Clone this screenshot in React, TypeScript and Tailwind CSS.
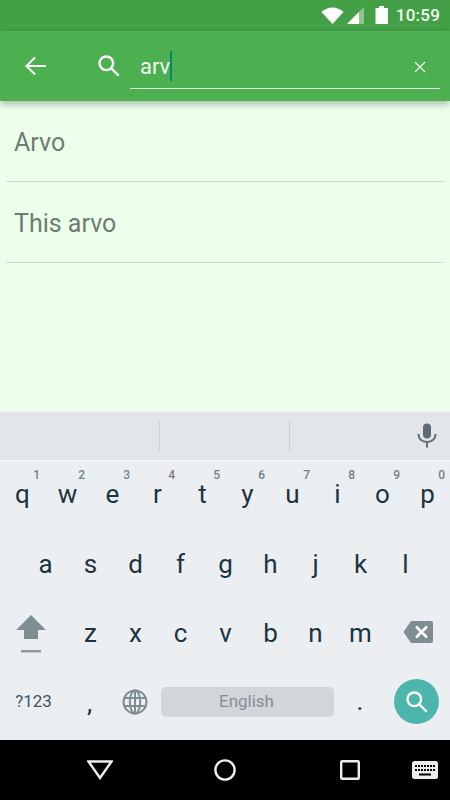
import React from "react";

const font = { fontFamily: "Roboto, sans-serif" };

function SearchIcon({ size, stroke = 2.2 }: { size: number; stroke?: number }) {
  return (
    <svg width={size} height={size} viewBox="0 0 24 24" fill="none" stroke="white" strokeWidth={stroke}>
      <circle cx="9.5" cy="9.5" r="6.3" />
      <path d="M14.2 14.2L21 21" />
    </svg>
  );
}

function Key({ c, n }: { c: string; n?: string }) {
  return (
    <div className="relative w-[45px] flex items-center justify-center text-[26px] text-[#1c3440]">
      {c}
      {n && <span className="absolute right-[5px] top-[8px] text-[12px] font-medium text-[#737f87]">{n}</span>}
    </div>
  );
}

export default function App() {
  const row1 = "qwertyuiop".split("");
  return (
    <div className="w-[450px] h-[800px] flex flex-col overflow-hidden bg-[#ebffeb] font-['Roboto']">
      <div className="h-[31px] bg-[#43a047] flex items-center justify-end pr-[10px] shrink-0">
        <svg width="23" height="17" viewBox="0 0 23 17" className="mr-[3px]"><path d="M0.5 5C7 -1 16 -1 22.5 5L11.5 17Z" fill="white" /></svg>
        <svg width="18" height="18" viewBox="0 0 18 18" className="mr-[10px]"><path d="M0 17L17 0V17Z" fill="white" fillOpacity="0.4" /><path d="M0 17L12 5V17Z" fill="white" /></svg>
        <svg width="13" height="19" viewBox="0 0 13 19" className="mr-[8px]"><path d="M4 0H9V2H13V18H0.5V2H4Z" fill="white" /></svg>
        <span className="text-[17px] font-medium text-white/95 tracking-[0.2px]">10:59</span>
      </div>
      <div className="relative z-10 h-[70px] bg-[#4caf50] flex items-center shrink-0 shadow-[0_3px_7px_rgba(0,0,0,0.28)]">
        <svg width="24" height="24" viewBox="0 0 24 24" className="ml-[23px] mr-[49px]" fill="none" stroke="white" strokeWidth="2">
          <path d="M23 12H3M12 3.5L3.5 12L12 20.5" />
        </svg>
        <div className="mr-[8px] -mt-[1px]"><SearchIcon size={26} /></div>
        <div className="w-[310px] h-[41px] mt-[5px] border-b border-white/80 flex items-center pl-[10px] pr-[14px] justify-between">
          <div className="flex items-center text-[22px] text-white/95 leading-none -mt-[3px]">
            arv<span className="w-[2px] h-[30px] bg-[#00897b] -mt-[1px]" />
          </div>
          <svg width="12" height="12" viewBox="0 0 12 12" stroke="white" strokeWidth="1.2" className="-mt-[3px]"><path d="M1 1L11 11M11 1L1 11" /></svg>
        </div>
      </div>
      <div className="h-[309px] px-[6px] shrink-0 text-[25px] text-[#6e7b72]" style={font}>
        <div className="h-[81px] pt-[3px] pl-[8px] border-b border-[#cfdccf] flex items-center">Arvo</div>
        <div className="h-[81px] pt-[3px] pl-[8px] border-b border-[#cfdccf] flex items-center">This arvo</div>
      </div>
      <div className="h-[51px] shrink-0 bg-[#e3e6e9] border-t-2 border-t-[#f4f6f7] border-b-[1px] border-b-[#f4f6f7] flex items-center">
        <div className="w-[160px] h-[30px] border-r border-[#ccd0d3]" />
        <div className="w-[130px] h-[30px] border-r border-[#ccd0d3]" />
        <div className="flex-1 flex justify-end pr-[11px]">
          <svg width="24" height="26" viewBox="0 0 24 26" fill="none">
            <rect x="8" y="0.5" width="8" height="15" rx="4" fill="#5e6b73" />
            <path d="M3.5 11C3.5 16 7 19 12 19S20.5 16 20.5 11M12 19V24.5" stroke="#5e6b73" strokeWidth="2" />
          </svg>
        </div>
      </div>
      <div className="h-[279px] shrink-0 bg-[#eceff2] flex flex-col" style={font}>
        <div className="h-[69px] flex"><div className="flex w-full -mt-[3px]">{row1.map((c, i) => <Key key={c} c={c} n={String((i + 1) % 10)} />)}</div></div>
        <div className="h-[69px] flex pl-[23px]">{"asdfghjkl".split("").map((c) => <Key key={c} c={c} />)}</div>
        <div className="h-[69px] flex">
          <div className="w-[68px] flex items-center justify-center">
            <svg width="32" height="38" viewBox="0 0 32 38" className="mr-[6px]">
              <path d="M16 0L31 15H23V24H9V15H1Z" fill="#7f8c92" />
              <rect x="6" y="35" width="20" height="2.5" fill="#8f9ba1" />
            </svg>
          </div>
          {"zxcvbnm".split("").map((c) => <Key key={c} c={c} />)}
          <div className="flex-1 flex items-center pl-[20px]">
            <svg width="31" height="24" viewBox="0 0 31 24" className="-mt-[3px]">
              <path d="M8 1H28A2 2 0 0 1 30 3V21A2 2 0 0 1 28 23H8L0.5 12Z" fill="#7f8c92" />
              <path d="M13 6.5L24 17.5M24 6.5L13 17.5" stroke="white" strokeWidth="2.6" />
            </svg>
          </div>
        </div>
        <div className="flex-1 flex items-center -mt-[5px]">
          <div className="w-[67px] text-center text-[17px] text-[#3f5560]">?123</div>
          <div className="w-[45px] text-center text-[26px] text-[#1c3440] mt-[4px]">,</div>
          <svg width="26" height="26" viewBox="0 0 26 26" fill="none" stroke="#7f8c92" strokeWidth="2" className="ml-[10px] mr-[13px]">
            <circle cx="13" cy="13" r="11.5" />
            <ellipse cx="13" cy="13" rx="5.2" ry="11.5" />
            <path d="M13 1.5V24.5M2.5 9H23.5M2.5 17H23.5" />
          </svg>
          <div className="w-[173px] h-[30px] rounded-[5px] bg-[#d2d6d9] flex items-center justify-center text-[17px] text-[#858e93] pr-[2px]">English</div>
          <div className="w-[52px] text-center text-[26px] text-[#1c3440] mt-[-1px]">.</div>
          <div className="ml-[8px] w-[45px] h-[45px] rounded-full bg-[#4db6ac] flex items-center justify-center">
            <SearchIcon size={26} />
          </div>
        </div>
      </div>
      <div className="flex-1 bg-black flex items-center relative">
        <svg width="26" height="20" viewBox="0 0 26 20" fill="none" stroke="#ededed" strokeWidth="2.4" className="ml-[87px] mr-[101px]"><path d="M1.5 1.5H24.5L13 18Z" /></svg>
        <svg width="22" height="22" viewBox="0 0 22 22" fill="none" stroke="#ededed" strokeWidth="2.4" className="mr-[104px]"><circle cx="11" cy="11" r="9.6" /></svg>
        <svg width="20" height="20" viewBox="0 0 20 20" fill="none" stroke="#ededed" strokeWidth="2.4" className="mr-[52px]"><rect x="1.2" y="1.2" width="17.6" height="17.6" rx="1" /></svg>
        <svg width="26" height="18" viewBox="0 0 26 18"><rect width="26" height="18" rx="2.5" fill="#ededed" /><path d="M3 5H23M3 9H23" stroke="black" strokeWidth="2" strokeDasharray="2 1" /><rect x="7" y="12.5" width="12" height="2" fill="black" /></svg>
      </div>
    </div>
  );
}
